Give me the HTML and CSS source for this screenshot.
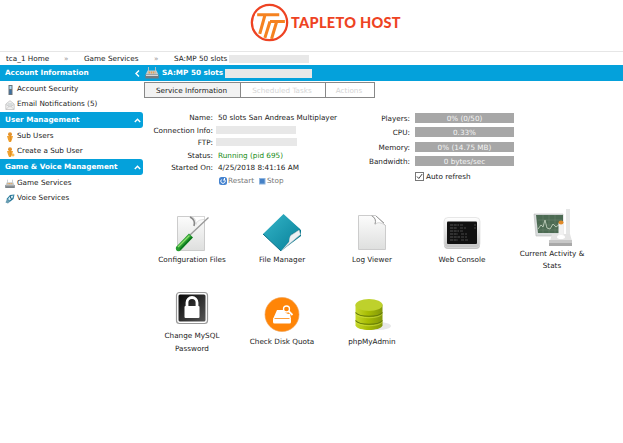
FILE: index.html
```html
<!DOCTYPE html>
<html lang="en">
<head>
<meta charset="utf-8">
<title>Tapleto Host</title>
<link rel="stylesheet" href="styles.css">
</head>
<body>
<svg class="defs" aria-hidden="true">
  <defs>
    <linearGradient id="paper" x2="0" y2="1"><stop stop-color="#fcfcfc"/><stop offset="1" stop-color="#dedfde"/></linearGradient>
    <linearGradient id="folder" x2="1" y2="1"><stop stop-color="#35b5c8"/><stop offset="1" stop-color="#078099"/></linearGradient>
    <linearGradient id="lime"><stop stop-color="#c5d72b"/><stop offset=".45" stop-color="#a8bd04"/><stop offset="1" stop-color="#82970a"/></linearGradient>
    <linearGradient id="dark" x2="1" y2="1"><stop stop-color="#080808"/><stop offset="1" stop-color="#555"/></linearGradient>
    <linearGradient id="silver" x2="0" y2="1"><stop stop-color="#fff"/><stop offset="1" stop-color="#c4c4c4"/></linearGradient>
    <symbol id="router" viewBox="0 0 14 12"><path d="M3.500 0v5M10.500 0v5" stroke="#b4bdc2"/><path d="M2.500 3.500h9l2 4.500H.5z" fill="#c3cbce"/><path d="M3.500 5.500h7" stroke="#e4a154" stroke-width="1.800" stroke-dasharray="1.500 .7"/><path d="M.3 7.500h13.400v4H.3z" fill="#737b80"/><path d="M1 8.500h12" stroke="#d5d9db"/></symbol>
    <symbol id="user" viewBox="0 0 10 10"><circle cx="5" cy="2.200" r="2" fill="#e4932c"/><path d="M2 4h6L7 7.500 6 9.900H4L3 7.500z" fill="#f0a02e"/><path d="M5.500 4v5" stroke="#d98a20" stroke-width=".7"/></symbol>
  </defs>
</svg>
<header class="brand">
  <svg class="brand-mark" viewBox="0 0 38 38"><circle cx="19" cy="19" r="17.200" fill="none" stroke="#ee4323" stroke-width="2.200"/><path d="M7 11.500h21.500M14.500 12L9.500 30M19.500 18H34M26 18L21 35M19.500 18L14.500 34" fill="none" stroke="#f58220" stroke-width="3"/></svg>
  <span class="brand-name">TAPLETO HOST</span>
</header>
<nav class="crumbs">
  <span class="crumb-home">tca_1 Home</span><span class="sep">»</span><span class="crumb-services">Game Services</span><span class="sep">»</span><span class="crumb-current">SA:MP 50 slots</span><i class="mask mask-crumb"></i>
</nav>
<div class="page">
  <aside class="sidebar">
    <h2 class="side-head flat">Account Information<svg class="chev" viewBox="0 0 7 7"><path d="M5 .5L2 3.500l3 3"/></svg></h2>
    <ul>
      <li><svg viewBox="0 0 10 10"><path d="M3.500 0h4v10h-4z" fill="#68737b"/><path d="M4.500 1h2v3h-2z" fill="#aedcf5"/><path d="M4.500 5h2v4h-2z" fill="#3b71a4"/></svg>Account Security</li>
      <li><svg viewBox="0 0 10 10"><path d="M.8 4L5 .7 9.200 4v5.500H.8z" fill="#f1f1f1" stroke="#bbb" stroke-width=".7"/><path d="M2.500 3h5v2.500l-2.500 1-2.500-1z" fill="#d8dcdd"/><path d="M1 4.500l4 2.500 4-2.500M1 9.300L4 6.500M9 9.300L6 6.500" fill="none" stroke="#bbb" stroke-width=".6"/></svg>Email Notifications (5)</li>
    </ul>
    <h2 class="side-head">User Management<svg class="chev" viewBox="0 0 7 7"><path d="M.8 5l2.700-2.700L6.200 5"/></svg></h2>
    <ul>
      <li><svg><use href="#user"/></svg>Sub Users</li>
      <li><svg viewBox="0 0 10 10"><use href="#user"/><path d="M8 6.500v3M6.500 8h3" stroke="#f5a623"/></svg>Create a Sub User</li>
    </ul>
    <h2 class="side-head">Game &amp; Voice Management<svg class="chev" viewBox="0 0 7 7"><path d="M.8 5l2.700-2.700L6.200 5"/></svg></h2>
    <ul>
      <li><svg><use href="#router"/></svg>Game Services</li>
      <li><svg viewBox="0 0 10 10"><path d="M9.500.5L5 .9 1.500 5l2.800 3.200L8.500 5z" fill="#297b9d"/><path d="M8.500 1.500L5 2.300 3 5l1.500 1.500L7.500 4z" fill="#d5edf5"/><path d="M2 5L.5 8.500 3 9.500l2-2" fill="#6a9db2"/><path d="M5 2l1.500 3.500" stroke="#16516e"/></svg>Voice Services</li>
    </ul>
  </aside>
  <main class="main">
    <h1 class="title"><svg class="title-icon"><use href="#router"/></svg>SA:MP 50 slots<i class="mask mask-title"></i></h1>
    <div class="tabs"><span class="tab tab-on">Service Information</span><span class="tab tab-tasks">Scheduled Tasks</span><span class="tab tab-actions">Actions</span></div>
    <section class="info">
      <dl class="details">
        <dt>Name:</dt><dd>50 slots San Andreas Multiplayer</dd>
        <dt>Connection Info:</dt><dd><i class="mask mask-conn"></i></dd>
        <dt>FTP:</dt><dd><i class="mask mask-ftp"></i></dd>
        <dt>Status:</dt><dd class="running">Running (pid 695)</dd>
        <dt>Started On:</dt><dd>4/25/2018 8:41:16 AM</dd>
        <dt></dt><dd class="controls"><svg viewBox="0 0 8 8"><rect width="8" height="8" rx="2.500" fill="#4583cf"/><path d="M2.500 2.500a2.200 2.200 0 1 0 3 0M5.500 1v2H4" fill="none" stroke="#fff"/></svg><span class="restart">Restart</span><svg class="stop" viewBox="0 0 8 8"><rect x="1.500" y="1.500" width="5.500" height="5.500" fill="#4681c6" stroke="#8db4df"/></svg><span>Stop</span></dd>
      </dl>
      <dl class="usage">
        <dt>Players:</dt><dd>0% (0/50)</dd>
        <dt>CPU:</dt><dd>0.33%</dd>
        <dt>Memory:</dt><dd>0% (14.75 MB)</dd>
        <dt>Bandwidth:</dt><dd>0 bytes/sec</dd>
        <dt></dt><dd class="refresh"><svg viewBox="0 0 9 9"><rect x=".5" y=".5" width="8" height="8" fill="#fff" stroke="#777"/><path d="M2 4.500l1.800 2L7.200 2" fill="none" stroke="#444"/></svg>Auto refresh</dd>
      </dl>
    </section>
    <section class="apps">
      <div class="app"><svg viewBox="0 0 40 40"><path d="M5.500 2.500h27v34h-27z" fill="url(#paper)" stroke="#ccc"/><path d="M19 2.500c4 1 5 4 5 8 1-4 4-5 8.500-5v-3z" fill="#fff" stroke="#ccc" stroke-width=".6"/><path d="M18 3q6 3 4 9" fill="none" stroke="#888" stroke-width="1.600"/><path d="M18 21L36.500 3.500" stroke="#999" stroke-width="1.300"/><path d="M4 33L17 19.500l4 4L8 37q-5 1-4-4z" fill="#279b30"/><path d="M6 33L17.500 21.500" stroke="#8ddd6c" stroke-width="1.500"/><path d="M8 35.500L20 23" stroke="#08751d" stroke-width="1.500"/></svg><span>Configuration Files</span></div>
      <div class="app"><svg viewBox="0 0 40 40"><path d="M22 2l17 14v6L19 37l5-12z" fill="#087b91"/><path d="M19 37l8-9q0-7 4-8l6-4 1.500 4.500z" fill="#eef1f4" stroke="#b4bec4" stroke-width=".6"/><path d="M21.500 0L38 15l-7 4q-4 1-4 8l-8 10L1 20z" fill="url(#folder)"/><path d="M1 20l18 17" stroke="#066f88"/></svg><span>File Manager</span></div>
      <div class="app"><svg viewBox="0 0 40 40"><path d="M6.500 1.500h17l10 10v24h-27z" fill="url(#paper)" stroke="#ccc"/><path d="M19 1.500c4 1 5 5 4 9 3-3 6-2 10.500 1l-10-10z" fill="#fff" stroke="#bbb" stroke-width=".6"/><path d="M20 2q5 3 3 8M24 2l8 7" fill="none" stroke="#9c9c9c"/></svg><span>Log Viewer</span></div>
      <div class="app"><svg viewBox="0 0 40 40"><rect x="2" y="5" width="36" height="30" rx="4" fill="#c5c5c5"/><rect x="2" y="3.500" width="36" height="30" rx="4" fill="url(#silver)" stroke="#ddd" stroke-width=".7"/><rect x="5" y="7.500" width="30" height="22.500" rx="1" fill="#111"/><path d="M8 11h9M8 14h7M8 17h9M8 20h8M8 23h10M8 26h8" stroke="#555" stroke-dasharray="3 .7"/><path d="M18 11h4M18 14h6M18 17h3M19 20h6M19 23h6M19 26h7M32 11h2M32 14h2" stroke="#484848" stroke-dasharray="3 1"/></svg><span>Web Console</span></div>
      <div class="app"><svg viewBox="0 0 40 40"><path d="M2 6h29v22H4z" fill="#d9dddd" stroke="#bbb" stroke-width=".6"/><path d="M4 7h27v18H6z" fill="#4c6b53"/><path d="M6 12h24M6 17h24M6 22h24M11 7v18M17 7v18M23 7v18" stroke="#6c8470" stroke-width=".5"/><path d="M6 21l3-4 2 2 2-7 2 8 3 1 3-5 3 3 4-3" fill="none" stroke="#b5c5b2"/><path d="M34 1h4v28h-4z" fill="#e5e6e6"/><path d="M20 26l-2 7h22l-2-7z" fill="#e3e3e3"/><path d="M17 32h23v6H17z" fill="#a9a9a9"/><path d="M17 32h23v3H17z" fill="#c8c8c8"/><path d="M26.500 15h5v14h-5z" fill="#f1f1f1"/><ellipse cx="29" cy="29" rx="4" ry="2" fill="#fff"/><ellipse cx="29" cy="14.500" rx="2.500" ry="2" fill="#e18a28"/></svg><span>Current Activity &amp;<br>Stats</span></div>
      <div class="app"><svg viewBox="0 0 40 40"><rect x="4.500" y="2.500" width="31" height="31" rx="3" fill="#fff" stroke="#999" stroke-width="1.200"/><rect x="6.500" y="4.500" width="27" height="27" rx="1.500" fill="url(#dark)"/><path d="M15 16.500v-4a5 5 0 0 1 10 0v4" fill="none" stroke="#fff" stroke-width="2.800"/><rect x="12.500" y="16" width="15" height="12" rx="1" fill="#fff"/></svg><span>Change MySQL<br>Password</span></div>
      <div class="app"><svg viewBox="0 0 40 40"><circle cx="20" cy="18.500" r="17" fill="#ff8507" stroke="#f0a053" stroke-width=".6"/><path d="M15 14h7q1 4 6 4l1 5H11z" fill="#fff"/><rect x="11" y="22" width="18" height="5.500" rx="1.500" fill="#fff"/><path d="M12.500 22.500h15" stroke="#ff8507" stroke-width=".8"/><circle cx="24.500" cy="13" r="3" fill="#ff8507" stroke="#fff" stroke-width="1.300"/><path d="M26.500 15l4 4" stroke="#fff" stroke-width="1.800"/></svg><span>Check Disk Quota</span></div>
      <div class="app"><svg viewBox="0 0 40 40"><ellipse cx="26" cy="30" rx="13" ry="4" fill="#e8e8e8"/><path d="M3.500 8.500v21c2 6 25 6 27 0v-21z" fill="url(#lime)"/><path d="M3.500 16.500c4 5 23 5 27 0M3.500 24.500c4 5 23 5 27 0" fill="none" stroke="#657b0b" stroke-width="1.200"/><path d="M3.500 18c4 5 23 5 27 0M3.500 26c4 5 23 5 27 0" fill="none" stroke="#cee042" stroke-width=".7"/><ellipse cx="17" cy="9" rx="13.500" ry="6" fill="#bed12c"/></svg><span>phpMyAdmin</span></div>
    </section>
  </main>
</div>
</body>
</html>
```

FILE: styles.css
```css
* { box-sizing: border-box; }
body { margin: 0; background: #fff; color: #222; font: 7.25px/12.6px "DejaVu Sans", Verdana, sans-serif; white-space: nowrap; overflow: hidden; }
.defs { position: absolute; width: 0; height: 0; }
svg { flex: none; display: block; }
ul, dl, h1, h2, dd { margin: 0; padding: 0; list-style: none; }
.brand { height: 51px; display: flex; padding: 3px 0 0 250px; }
.brand-mark { width: 39px; height: 39px; }
.brand-name { font: 900 14.5px/39px Lato, sans-serif; letter-spacing: .3px; color: #ee4323; margin-left: 2px; }
.crumbs { height: 14px; border-top: 1px solid #e6e6e6; display: flex; align-items: center; padding: 1px 0 0 6px; }
.crumb-home { width: 58px; }
.crumb-services { width: 70px; }
.crumb-current { width: 55px; }
.sep { width: 20px; color: #999; }
.mask { display: block; background: #e8e8e8; height: 8px; }
.mask-crumb { width: 80px; }
.page { display: flex; }
.sidebar { width: 143px; }
.side-head { height: 16px; background: #04a1db; color: #fff; font-size: 7.25px; line-height: 16px; padding: 0 2px 0 5px; display: flex; align-items: center; justify-content: space-between; border-radius: 0 3px 3px 0; }
.side-head.flat { border-radius: 0; }
.chev { width: 7px; height: 7px; fill: none; stroke: #fff; stroke-width: 1.4; }
.sidebar ul { height: 31px; padding-top: 1px; }
.sidebar li { height: 15px; display: flex; align-items: center; padding-left: 5px; gap: 2px; }
.sidebar li svg { width: 10px; height: 10px; }
.main { flex: 1; }
.title { height: 16px; background: #04a1db; color: #fff; font-size: 7.25px; line-height: 16px; display: flex; align-items: center; box-shadow: -1px 0 #04a1db; }
.title-icon { width: 14px; height: 12px; margin: 0 3px 0 2px; }
.mask-title { width: 87px; height: 9px; margin-left: 2px; }
.tabs { display: flex; height: 17px; padding: 1px 0 0 1px; }
.tab { border: 1px solid #888; border-left-width: 0; text-align: center; line-height: 15px; color: #d5d5d5; padding-right: 2px; }
.tab-on { width: 97px; background: #f2f2f2; color: #222; border-left-width: 1px; }
.tab-tasks { width: 85px; }
.tab-actions { width: 49px; }
.info { display: flex; padding-top: 14px; height: 104px; }
dl { display: grid; align-content: start; }
dt { text-align: right; }
.details { width: 210px; grid-template-columns: 70px 1fr; column-gap: 5px; grid-auto-rows: 12.6px; }
.details dd { display: flex; align-items: center; }
.mask-conn, .mask-ftp { width: 80px; margin: -2px 0 0 -2px; }
.mask-ftp { width: 81px; }
.running { color: #168c16; }
.controls { color: #777; }
.controls svg { width: 8px; height: 8px; margin-left: 1px; }
.restart { width: 29px; margin-left: 1px; }
.controls .stop { margin-right: 1px; }
.usage { width: 162px; padding-top: 1px; grid-template-columns: 57px 99px; column-gap: 5px; grid-auto-rows: 14.4px; }
.usage dt { line-height: 11px; }
.usage dd { background: #a7a7a7; color: #f5f5f5; height: 10px; line-height: 11px; text-align: center; }
.usage .refresh { background: none; color: #222; display: flex; align-items: center; height: 11px; gap: 2px; }
.refresh svg { width: 9px; height: 9px; }
.apps { display: grid; grid-template-columns: repeat(5, 90px); grid-auto-rows: 82.5px; align-items: center; padding-left: 4px; margin-top: -3px; }
.app { display: flex; flex-direction: column; align-items: center; text-align: center; }
.app svg { width: 40px; height: 40px; }
```
